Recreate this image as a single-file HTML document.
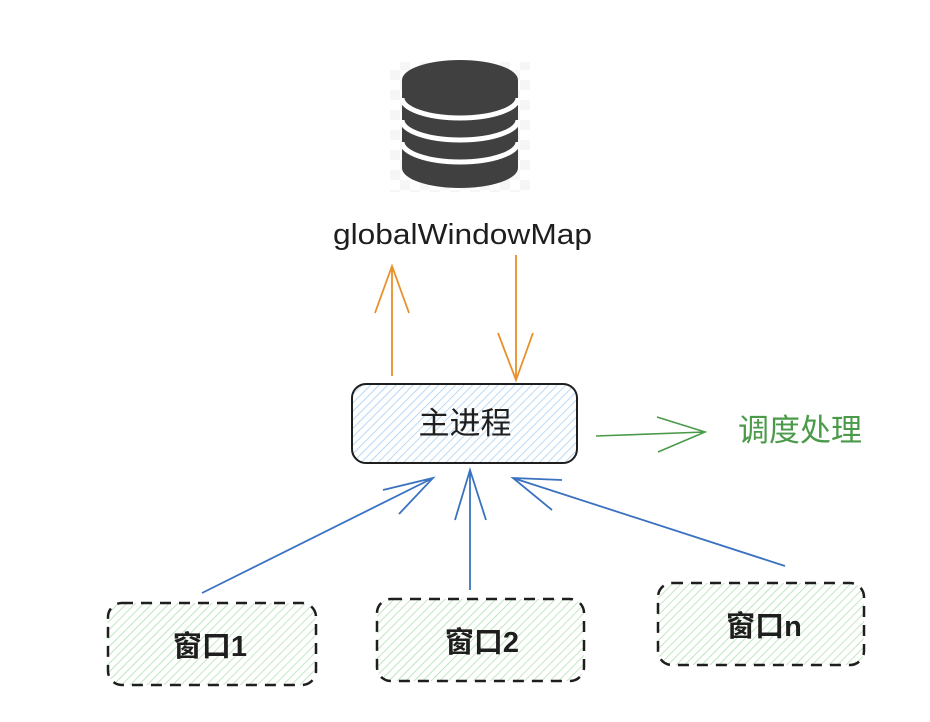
<!DOCTYPE html>
<html><head><meta charset="utf-8"><style>body{margin:0;background:#fff}svg{display:block}</style></head><body>
<svg width="930" height="722" viewBox="0 0 930 722" xmlns="http://www.w3.org/2000/svg">
<defs>
<pattern id="hb" width="6" height="6" patternUnits="userSpaceOnUse" patternTransform="rotate(45)"><line x1="0" y1="0" x2="0" y2="6" stroke="#9cc9f2" stroke-width="1.4"/></pattern>
<pattern id="hg" width="6" height="6" patternUnits="userSpaceOnUse" patternTransform="rotate(45)"><line x1="0" y1="0" x2="0" y2="6" stroke="#a8dca8" stroke-width="1.4"/></pattern>
<pattern id="ck" width="20" height="20" patternUnits="userSpaceOnUse"><rect width="10" height="10" fill="#f0f0f0"/><rect x="10" y="10" width="10" height="10" fill="#f0f0f0"/></pattern>
</defs>
<rect x="390" y="62" width="140" height="130" fill="url(#ck)" opacity="0.6"/>
<path fill="#404040" d="M402 80 A58 20 0 0 1 518 80 L518 168 A58 20 0 0 1 402 168 Z"/>
<g fill="none" stroke="#fff" stroke-width="5">
<path d="M402 98 A58 20 0 0 0 518 98"/>
<path d="M402 120 A58 20 0 0 0 518 120"/>
<path d="M402 142 A58 20 0 0 0 518 142"/>
</g>
<text x="333" y="244" font-family="Liberation Sans, sans-serif" font-size="29" textLength="259" lengthAdjust="spacingAndGlyphs" fill="#1e1e1e">globalWindowMap</text>
<g stroke="#e8902a" stroke-width="1.8" fill="none">
<path d="M392 376 L392 266 M375 313 L392 266 L409 313"/>
<path d="M516 255 L516 380 M498 333 L516 380 L533 333"/>
</g>
<rect x="352" y="384" width="225" height="79" rx="14" fill="url(#hb)" stroke="#1e1e1e" stroke-width="2"/>
<text x="465" y="434" font-family="Liberation Sans, Noto Sans CJK SC, sans-serif" font-size="31" text-anchor="middle" fill="#1e1e1e">主进程</text>
<g stroke="#4a9a4a" stroke-width="1.6" fill="none">
<path d="M596 436 L705 432 M657 417 L705 432 L658 452"/>
</g>
<text x="738" y="441" font-family="Liberation Sans, Noto Sans CJK SC, sans-serif" font-size="31" fill="#4a9a4a">调度处理</text>
<g stroke="#3a72c0" stroke-width="1.8" fill="none">
<path d="M202 593 L433 478 M383 490 L433 478 L399 514"/>
<path d="M470 590 L470 470 M455 520 L470 470 L486 520"/>
<path d="M785 566 L513 478 M562 480 L513 478 L552 510"/>
</g>
<g stroke="#1e1e1e" stroke-width="2.5" stroke-dasharray="11 8">
<rect x="108" y="603" width="208" height="82" rx="14" fill="url(#hg)"/>
<rect x="377" y="599" width="207" height="82" rx="14" fill="url(#hg)"/>
<rect x="658" y="583" width="206" height="82" rx="14" fill="url(#hg)"/>
</g>
<g font-family="Liberation Sans, Noto Sans CJK SC, sans-serif" font-size="29" fill="#1e1e1e" font-weight="bold">
<text x="210" y="656" text-anchor="middle">窗口1</text>
<text x="482" y="652" text-anchor="middle">窗口2</text>
<text x="764" y="636" text-anchor="middle">窗口n</text>
</g>
</svg>
</body></html>
